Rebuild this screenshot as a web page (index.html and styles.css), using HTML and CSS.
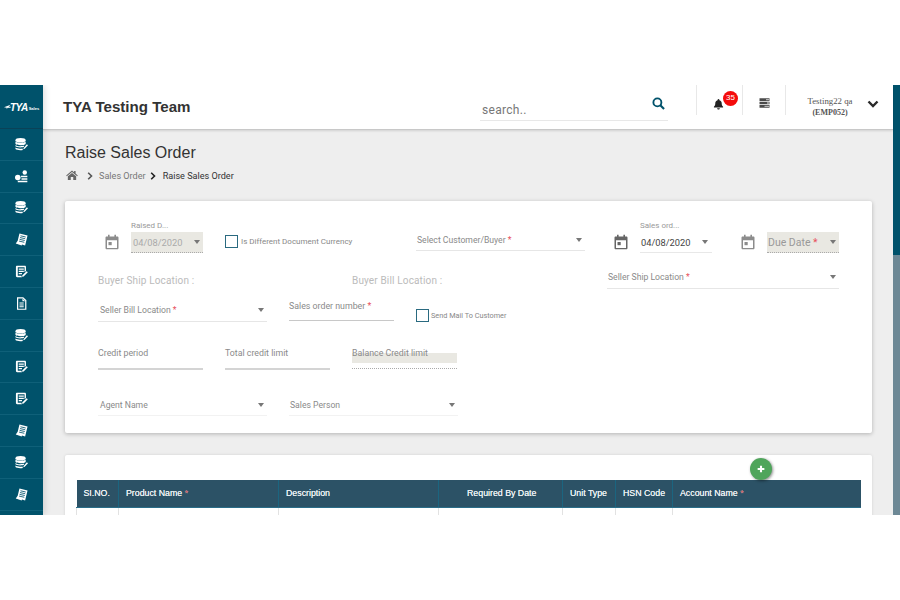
FILE: index.html
```html
<!DOCTYPE html>
<html lang="en">
<head>
<meta charset="utf-8">
<title>Raise Sales Order</title>
<link rel="stylesheet" href="styles.css">
</head>
<body>
<svg class="defs" width="0" height="0" aria-hidden="true">
  <symbol id="i-db" viewBox="0 0 14 14">
    <ellipse cx="6" cy="2.500" rx="5.500" ry="2.400" fill="#fff"/>
    <path d="M.5 3.900c1.200 1.700 9.800 1.700 11 0v2.500c-1.200 1.700-9.800 1.700-11 0z" fill="#fff"/>
    <path d="M.5 7.500c1.300 1.500 7 1.700 8.500.7l1 1c-2 1.400-8 1.200-9.500-.2z" fill="#fff"/>
    <path d="M.5 10.300c1.500 1.300 5.500 1.500 7.500.9l.5 1.600c-2.700.7-7 .2-8-.9z" fill="#fff"/>
    <path d="M9.300 10.700l3.500-4 1.200 1.100-3.600 3.900-1.500.4z" fill="#fff"/>
  </symbol>
  <symbol id="i-pin" viewBox="0 0 14 14">
    <circle cx="10.500" cy="2.600" r="2.400" fill="#fff"/>
    <circle cx="3" cy="8" r="3" fill="#fff"/>
    <path d="M6.500 6.300h6.800v1.500H6.500zM7 8.900h6.300v1.500H7zM3 11.700h10.300v1.500H3z" fill="#fff"/>
  </symbol>
  <symbol id="i-receipt" viewBox="0 0 14 14">
    <path d="M4.800.5l8.700 2.100-2.600 10.800-3.400-.9-.3.900L.8 11.300l2.100-3z" fill="#fff"/>
    <path d="M5.900 3l5.600 1.300M5.400 4.900L11 6.200M4.900 6.800l5.600 1.300M4.400 8.700l5.600 1.300" stroke="#00526b" stroke-width=".9"/>
  </symbol>
  <symbol id="i-form" viewBox="0 0 14 14">
    <path d="M2.300.8h8.200c.8 0 1.300.5 1.300 1.300v4.300l-1.500 1.500V2.300H3v9.400h3.800l.7 1.500H2.300c-.8 0-1.300-.5-1.300-1.300V2.100C1 1.300 1.500.8 2.300.8z" fill="#fff"/>
    <path d="M4 3.800h5.500v1.400H4zM4 6.200h5.500v1.400H4zM4 8.600h3.500V10H4z" fill="#fff"/>
    <path d="M8 11.100l4.500-4.500 1.300 1.300-4.500 4.500-1.700.3z" fill="#fff"/>
  </symbol>
  <symbol id="i-doc" viewBox="0 0 14 14">
    <path d="M2.800.9h5.800l3 3v9.300H2.800z" fill="none" stroke="#fff" stroke-width="1.300"/>
    <path d="M4.800 6h4.600v1.100H4.800zM4.800 8h4.600v1.100H4.800zM4.800 10h4.600v1.100H4.800zM8 1.500v3h3z" fill="#fff"/>
  </symbol>
  <symbol id="i-cal" viewBox="0 0 16 16">
    <path d="M4 .8h1.600v1.600h4.800V.8H12v1.600h1.300c.7 0 1.200.5 1.200 1.200v10.300c0 .7-.5 1.300-1.200 1.300H2.700c-.7 0-1.200-.6-1.200-1.300V3.600c0-.7.500-1.200 1.200-1.200H4zM3 6.200v7.900h10V6.200z" fill="currentColor"/>
    <rect x="4.500" y="8" width="3.200" height="3.200" fill="currentColor"/>
  </symbol>
</svg>

<div class="band"></div>

<div class="frame">
  <nav class="sidebar">
    <div class="logo">
      <svg class="logo-wing" viewBox="0 0 9 6"><path d="M0 3.200L8.500 0 6 2.600h3L8.200 4H4.500L3.600 6 3.400 4z" fill="#fff"/></svg>
      <span class="logo-mark">TYA</span><span class="logo-sub">Sales</span>
    </div>
    <a class="nav-item"><svg class="nav-icon"><use href="#i-db"/></svg></a>
    <a class="nav-item"><svg class="nav-icon"><use href="#i-pin"/></svg></a>
    <a class="nav-item"><svg class="nav-icon"><use href="#i-db"/></svg></a>
    <a class="nav-item"><svg class="nav-icon"><use href="#i-receipt"/></svg></a>
    <a class="nav-item"><svg class="nav-icon"><use href="#i-form"/></svg></a>
    <a class="nav-item"><svg class="nav-icon"><use href="#i-doc"/></svg></a>
    <a class="nav-item"><svg class="nav-icon"><use href="#i-db"/></svg></a>
    <a class="nav-item"><svg class="nav-icon"><use href="#i-form"/></svg></a>
    <a class="nav-item"><svg class="nav-icon"><use href="#i-form"/></svg></a>
    <a class="nav-item"><svg class="nav-icon"><use href="#i-receipt"/></svg></a>
    <a class="nav-item"><svg class="nav-icon"><use href="#i-db"/></svg></a>
    <a class="nav-item"><svg class="nav-icon"><use href="#i-receipt"/></svg></a>
  </nav>

  <div class="main">
    <header class="topbar">
      <h1 class="team">TYA Testing Team</h1>
      <div class="search">
        <span class="search-text">search..</span>
        <svg class="search-icon" viewBox="0 0 14 14"><circle cx="5.800" cy="5.800" r="4.300" fill="none" stroke="#00526b" stroke-width="2"/><path d="M9 9l4 4" stroke="#00526b" stroke-width="2.300"/></svg>
      </div>
      <div class="tool tool-bell">
        <svg class="bell" viewBox="0 0 12 12"><path d="M6 .5c.6 0 1 .4 1 1v.3c1.700.5 2.500 1.800 2.500 3.500 0 2 .6 3 1.500 3.700v.7H1v-.7c.9-.7 1.500-1.700 1.500-3.700C2.500 3.600 3.300 2.300 5 1.800v-.3c0-.6.400-1 1-1zM4.500 10.500h3C7.500 11.300 6.800 12 6 12s-1.500-.7-1.500-1.500z" fill="#222"/></svg>
        <span class="badge">35</span>
      </div>
      <div class="tool tool-menu">
        <svg class="list" viewBox="0 0 11 10"><path d="M.5.300h10v2.700H.5zM.5 3.650h10v2.700H.5zM.5 7h10v2.700H.5z" fill="#4a4a4a"/><path d="M7 1.650h3M8 5h2M5.500 8.350H10" stroke="#b5b5b5" stroke-width="1.300"/></svg>
      </div>
      <div class="user">
        <div class="user-text">
          <div class="user-name">Testing22 qa</div>
          <div class="user-id">(EMP052)</div>
        </div>
        <svg class="user-chev" viewBox="0 0 12 8"><path d="M1.500 1.500L6 6l4.500-4.500" fill="none" stroke="#2a2a2a" stroke-width="2.400"/></svg>
      </div>
    </header>

    <main class="content">
      <h2 class="page-title">Raise Sales Order</h2>
      <div class="crumbs">
        <svg class="home" viewBox="0 0 14 12"><path d="M7 .5l2.500 2.200V1.300h1.800v3L14 6.600l-.8.8L7 2.300.8 7.400 0 6.600zM2 7.600L7 3.500l5 4.100V12H8.500V8.500h-3V12H2z" fill="#666"/></svg>
        <svg class="crumb-sep crumb-sep-grey" viewBox="0 0 6 8"><path d="M1.200.8L4.500 4 1.200 7.200" fill="none" stroke="currentColor" stroke-width="1.600"/></svg>
        <span class="crumb">Sales Order</span>
        <svg class="crumb-sep crumb-sep-dark" viewBox="0 0 6 8"><path d="M1.200.8L4.500 4 1.200 7.200" fill="none" stroke="currentColor" stroke-width="1.600"/></svg>
        <span class="crumb crumb-current">Raise Sales Order</span>
      </div>

      <section class="card form-card">
        <div class="row row-1">
          <svg class="cal cal-muted"><use href="#i-cal"/></svg>
          <div class="date date-raised disabled">
            <span class="float-label">Raised D...</span>
            <span class="date-box"><span class="date-value">04/08/2020</span><i class="caret"></i></span>
          </div>
          <label class="check check-currency"><span class="box"></span><span class="check-text">Is Different Document Currency</span></label>
          <div class="select select-customer"><span>Select Customer/Buyer <em>*</em></span><i class="caret"></i></div>
          <svg class="cal cal-dark"><use href="#i-cal"/></svg>
          <div class="date date-sales">
            <span class="float-label">Sales ord...</span>
            <span class="date-box"><span class="date-value">04/08/2020</span><i class="caret"></i></span>
          </div>
          <svg class="cal cal-muted"><use href="#i-cal"/></svg>
          <div class="date date-due disabled">
            <span class="date-box"><span class="date-text">Due Date <em>*</em></span><i class="caret"></i></span>
          </div>
        </div>

        <div class="row row-2">
          <span class="static static-ship">Buyer Ship Location :</span>
          <span class="static static-bill">Buyer Bill Location :</span>
          <div class="select select-seller-ship"><span>Seller Ship Location <em>*</em></span><i class="caret"></i></div>
        </div>

        <div class="row row-3">
          <div class="select select-half select-bill"><span>Seller Bill Location <em>*</em></span><i class="caret"></i></div>
          <div class="input input-order"><span>Sales order number <em>*</em></span></div>
          <label class="check check-mail"><span class="box"></span><span class="check-text check-text-sm">Send Mail To Customer</span></label>
        </div>

        <div class="row row-4">
          <div class="input input-thick"><span>Credit period</span></div>
          <div class="input input-thick"><span>Total credit limit</span></div>
          <div class="input input-disabled"><span>Balance Credit limit</span></div>
        </div>

        <div class="row row-5">
          <div class="select select-half select-faint"><span>Agent Name</span><i class="caret"></i></div>
          <div class="select select-person select-faint"><span>Sales Person</span><i class="caret"></i></div>
        </div>
      </section>

      <section class="card table-card">
        <button class="fab" type="button" aria-label="Add row">
          <svg viewBox="0 0 10 10"><path d="M3.700.8h2.600v2.900h2.900v2.600H6.300v2.900H3.700V6.300H.8V3.700h2.900z" fill="#fff"/></svg>
        </button>
        <table class="items">
          <colgroup>
            <col class="c-no"><col class="c-name"><col class="c-desc"><col class="c-date"><col class="c-unit"><col class="c-hsn"><col class="c-acct">
          </colgroup>
          <thead>
            <tr>
              <th>SI.NO.</th>
              <th>Product Name <em>*</em></th>
              <th>Description</th>
              <th class="th-center">Required By Date</th>
              <th>Unit Type</th>
              <th>HSN Code</th>
              <th>Account Name <em>*</em></th>
            </tr>
          </thead>
          <tbody>
            <tr><td></td><td></td><td></td><td></td><td></td><td></td><td></td></tr>
          </tbody>
        </table>
      </section>
    </main>
  </div>

  <div class="scrollbar"><div class="thumb"></div></div>
</div>

<div class="band"></div>
</body>
</html>
```

FILE: styles.css
```css
* { box-sizing: border-box; }
html, body { margin: 0; padding: 0; background: #fff; }
body { font-family: Roboto, "Liberation Sans", sans-serif; overflow: hidden; }
.defs { position: absolute; }

.band { height: 85px; background: #fff; }
.frame { height: 430px; display: flex; overflow: hidden; }

/* sidebar */
.sidebar { width: 43px; flex: none; background: #00526b; position: relative; z-index: 2; box-shadow: 2px 0 6px rgba(0,0,0,.12); }
.logo { height: 44px; display: flex; align-items: center; justify-content: center; color: #fff; padding-top: 1px; border-bottom: 1px solid #0a4257; }
.logo-wing { width: 7px; height: 6px; margin-right: -1px; }
.logo-mark { font: italic 700 10px "Liberation Sans", sans-serif; letter-spacing: -.5px; }
.logo-sub { font: 700 4px "Liberation Sans", sans-serif; margin: 3px 0 0 1px; }
.nav-item { height: 31.800px; display: flex; align-items: center; justify-content: center; border-bottom: 1px solid #0f6079; }
.nav-icon { width: 13px; height: 13px; }

/* main */
.main { flex: 1; min-width: 0; display: flex; flex-direction: column; background: #eee; }
.topbar { height: 45px; flex: none; background: #fff; display: flex; align-items: flex-start; border-bottom: 1px solid #c8c8c8; box-shadow: 0 1px 2px rgba(0,0,0,.12); position: relative; z-index: 1; }
.team { margin: 12px 0 0 20px; width: 417px; font: 700 15.100px/20px "Liberation Sans", sans-serif; color: #333; }
.search { width: 188px; height: 36px; margin-right: 28px; border-bottom: 1px solid #e8e8e8; display: flex; justify-content: space-between; padding: 17px 3px 0 2px; }
.search-text { font: 12px/16px Roboto, sans-serif; color: #777; letter-spacing: .3px; }
.search-icon { width: 13px; height: 13px; margin-top: -5px; }
.tool { height: 30px; display: flex; justify-content: center; border-left: 1px solid #e8e8e8; position: relative; }
.tool-bell { width: 43px; }
.tool-menu { width: 43px; margin-left: 3px; }
.bell { width: 11px; height: 12px; margin: 13px 0 0 0; }
.list { width: 11px; height: 10px; margin: 13px 0 0 0; }
.badge { position: absolute; left: 26px; top: 6px; width: 15px; height: 15px; border-radius: 50%; background: #f40b0b; color: #fff; font: 8px/14px "Liberation Sans", sans-serif; text-align: center; }
.user { flex: 1; height: 30px; display: flex; border-left: 1px solid #e8e8e8; }
.user-text { width: 92px; padding: 11px 4px 0 0; text-align: center; font-family: "Liberation Serif", serif; color: #555; }
.user-name { font-size: 8.800px; line-height: 11px; }
.user-id { font-size: 8px; line-height: 11px; font-weight: 700; }
.user-chev { width: 12px; height: 8px; margin: 15px 0 0 -11px; }

.content { flex: 1; min-height: 0; padding: 13px 21px 0 22px; }
.page-title { margin: 0; font: 400 16px/20px "Liberation Sans", sans-serif; color: #333; }
.crumbs { display: flex; align-items: center; height: 12px; margin-top: 7px; margin-left: 1px; color: #777; }
.home { width: 12px; height: 10px; margin-top: -2px; }
.crumb-sep { width: 6px; height: 8px; }
.crumb-sep-grey { margin: 0 6px 0 9px; color: #555; }
.crumb-sep-dark { margin: 0 7px 0 4px; color: #222; }
.crumb { font: 9.100px/12px Roboto, sans-serif; }
.crumb-current { color: #333; }

.card { background: #fff; border-radius: 2px; box-shadow: 0 1px 4px rgba(0,0,0,.25); }
.form-card { height: 232px; margin-top: 19px; padding: 0 33px; display: flex; flex-direction: column; }
.table-card { height: 120px; margin-top: 22px; padding: 25px 12px 0 11px; position: relative; box-shadow: 0 0 3px rgba(0,0,0,.12); }

/* form rows */
.row { display: flex; flex: none; align-items: flex-start; font-size: 8.650px; color: #8a8a8a; }
.row em { font-style: normal; color: #e8505b; }
.row-1 { height: 33px; margin-top: 20px; }
.row-2 { height: 20px; margin-top: 17px; }
.row-3 { height: 30px; margin-top: 8px; }
.row-4 { height: 24px; margin-top: 17px; gap: 22px; }
.row-5 { height: 24px; margin-top: 24px; }

.cal { width: 16px; height: 16px; flex: none; }
.cal-muted { color: #8c8c8c; }
.cal-dark { color: #666; }
.row-1 > .cal { margin: 13px 0 0 28px; }
.row-1 > .cal:first-child { margin-left: 6px; }

.date { width: 72px; margin-left: 11px; flex: none; position: relative; padding-top: 11px; }
.float-label { position: absolute; left: 0; top: 0; font-size: 8px; line-height: 10px; color: #999; }
.date-box { display: flex; align-items: center; justify-content: space-between; height: 21px; padding: 0 3px 0 2px; border-bottom: 1px solid #e8e8e8; font-size: 9.300px; color: #444; }
.disabled .date-box { background: #e9e8e2; border-bottom: 1px dotted #aaa; color: #aaa; }
.date-sales .date-box { padding: 0 4px 0 1px; }
.date-due .date-box { color: #999; font-size: 10.500px; padding-left: 1px; }
.caret { display: inline-block; width: 0; height: 0; border: 3.500px solid transparent; border-top: 4px solid #777; border-bottom: 0; flex: none; }

.check { display: flex; align-items: center; flex: none; }
.box { width: 13px; height: 13px; border: 1.500px solid #2a6a80; background: #fff; flex: none; }
.check-text { margin-left: 3px; font-size: 8px; color: #888; }
.check-text-sm { margin-left: 2px; font-size: 7.300px; }
.check-currency { margin: 14px 0 0 22px; width: 191px; }

.select { display: flex; align-items: center; justify-content: space-between; height: 20px; padding: 0 3.500px 0 1px; border-bottom: 1px solid #e6e6e6; flex: none; }
.select-customer { width: 169px; height: 21px; margin-top: 9px; padding-bottom: 1px; }
.select-seller-ship { width: 232px; height: 18px; margin-left: 74px; padding-bottom: 5px; }
.select-half { width: 169px; padding-left: 2px; }
.select-bill { height: 23px; }
.select-person { width: 169px; margin-left: 22px; }
.select-faint { height: 22px; border-bottom-color: #f2f2f2; }

.static { flex: none; font-size: 10px; line-height: 20px; color: #bbb; letter-spacing: .15px; }
.static-ship { width: 254px; }
.static-bill { width: 181px; }

.input { width: 105px; height: 24px; border-bottom: 2px solid #d4d4d4; font-size: 8.800px; line-height: 15px; flex: none; }
.input-order { height: 22px; margin-left: 22px; padding-top: 1px; border-bottom-width: 1px; border-bottom-color: #c8c8c8; line-height: 12px; }
.input-disabled { height: 23px; border-bottom: 1px dotted #aaa; position: relative; }
.input-disabled::before { content: ""; position: absolute; left: 0; right: 0; top: 7px; height: 10px; background: #e9e8e2; }
.input-disabled span { position: relative; }
.check-mail { margin: 10px 0 0 22px; }

/* table */
.items { width: 784px; table-layout: fixed; border-collapse: collapse; font: 8.800px "Liberation Sans", sans-serif; }
.c-no { width: 42px; }
.c-name, .c-desc { width: 160px; }
.c-date { width: 124px; }
.c-unit { width: 53px; }
.c-hsn { width: 57px; }
.c-acct { width: 188px; }
.items th { height: 27px; padding: 0 6px 0 7px; background: #2c5266; color: #e9eef1; font-weight: 400; text-align: left; white-space: nowrap; border-left: 1px solid #1b6580; border-bottom: 1px solid #2a6d88; text-shadow: 0 0 .4px #fff; }
.items th:first-child { border-left: 0; }
.items th em { font-style: normal; color: #c4474f; }
.items .th-center { padding-left: 28px; }
.items td { height: 30px; border-left: 1px solid #e2e2e2; }
.fab { position: absolute; left: 685px; top: 3px; width: 22px; height: 22px; padding: 0; border: 0; border-radius: 50%; background: #4fa55b; box-shadow: 1px 1px 3px rgba(0,0,0,.45); display: flex; align-items: center; justify-content: center; }
.fab svg { width: 8px; height: 8px; }

/* page scrollbar */
.scrollbar { width: 7px; flex: none; background: #6d8895; }
.thumb { height: 170px; background: #00526b; }
```
